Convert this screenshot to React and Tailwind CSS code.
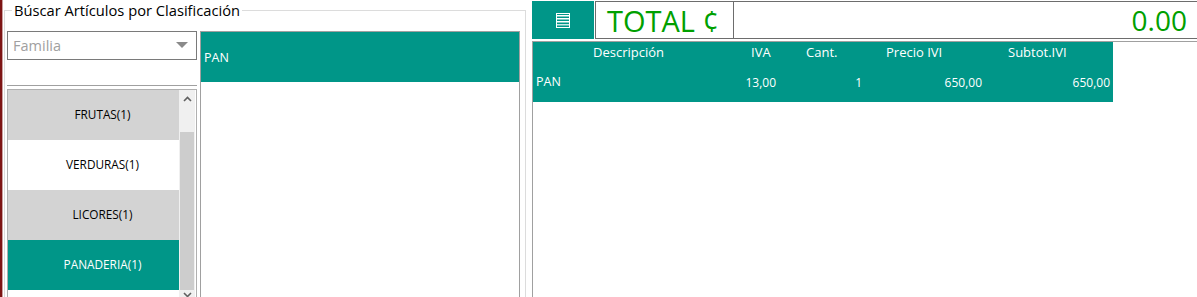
export default function App() {
    const categorias = [
        { nombre: "FRUTAS(1)", bg: "bg-[#d3d3d3]", text: "text-black" },
        { nombre: "VERDURAS(1)", bg: "bg-white", text: "text-black" },
        { nombre: "LICORES(1)", bg: "bg-[#d3d3d3]", text: "text-black" },
        { nombre: "PANADERIA(1)", bg: "bg-[#009688]", text: "text-white" },
    ];

    return (
        <div className="w-[1197px] h-[297px] overflow-hidden bg-white flex font-['Open_Sans',sans-serif]">
            {/* borde rojo de la ventana */}
            <div className="w-[3px] h-full flex">
                <div className="w-[2px] h-full bg-[#7d1414]"></div>
                <div className="w-[1px] h-full bg-[#c9a0a0]"></div>
            </div>
            <div className="w-[1px]"></div>

            <fieldset className="w-[522px] h-[320px] border border-[#dcdcdc] m-0 p-0 shrink-0">
                <legend className="ml-[7px] px-[2px] h-[20px] leading-[21px] text-[14.7px] text-black">
                    Búscar Artículos por Clasificación
                </legend>
                <div className="flex pl-[2px] mt-[11px]">
                    <div className="w-[190px] flex flex-col">
                        <div className="h-[29px] border border-[#7a7a7a] bg-white flex items-center justify-between px-[5px]">
                            <span className="text-[14.5px] text-[#a0a0a0]">Familia</span>
                            <svg width="12" height="7" viewBox="0 0 12 7" className="mr-[3px]">
                                <path d="M0 0 L12 0 L6 6 Z" fill="#8a8a8a" />
                            </svg>
                        </div>
                        <div className="h-[1px] bg-[#a0a0a0] mt-[25px] w-[190px]"></div>
                        <div className="mt-[3px] h-[220px] border border-[#b0b0b0] flex">
                            <div className="w-[171px] flex flex-col">
                                {categorias.map((c) => (
                                    <div
                                        key={c.nombre}
                                        className={`h-[50px] flex items-center justify-center pl-[18px] text-[11.8px] ${c.bg} ${c.text}`}
                                    >
                                        {c.nombre}
                                    </div>
                                ))}
                            </div>
                            <div className="w-[16px] flex flex-col bg-[#f0f0f0]">
                                <div className="h-[42px] flex justify-center pt-[6px]">
                                    <svg width="9" height="6" viewBox="0 0 9 6">
                                        <path d="M1 5 L4.5 1.5 L8 5" stroke="#606060" strokeWidth="1.6" fill="none" />
                                    </svg>
                                </div>
                                <div className="h-[158px] mx-[1px] bg-[#cdcdcd]"></div>
                                <div className="flex justify-center pt-[2px]">
                                    <svg width="9" height="6" viewBox="0 0 9 6">
                                        <path d="M1 1 L4.5 4.5 L8 1" stroke="#606060" strokeWidth="1.6" fill="none" />
                                    </svg>
                                </div>
                            </div>
                        </div>
                    </div>

                    <div className="ml-[3px] w-[320px] h-[300px] border border-[#a0a0a0] bg-white">
                        <div className="h-[50px] bg-[#009688] flex items-center pl-[3px] pt-[3px] text-[12.5px] text-white">
                            PAN
                        </div>
                    </div>
                </div>
            </fieldset>

            <div className="ml-[6px] flex-1 flex flex-col">
                <div className="mt-[1px] h-[38px] flex">
                    <div className="w-[62px] h-full bg-[#009688] flex items-center justify-center">
                        <svg width="14" height="15" viewBox="0 0 14 15">
                            <rect x="0.5" y="0.5" width="13" height="14" fill="none" stroke="white" strokeWidth="1" />
                            <rect x="1" y="2" width="12" height="1.5" fill="white" />
                            <rect x="1" y="5" width="12" height="1.5" fill="white" />
                            <rect x="1" y="8" width="12" height="1.5" fill="white" />
                            <rect x="1" y="11" width="12" height="1.5" fill="white" opacity="0.8" />
                        </svg>
                    </div>
                    <div className="ml-[1px] w-[139px] h-full border border-[#6d6d6d] flex items-center pl-[11px] text-[29px] leading-none text-[#00a000]">
                        TOTAL ¢
                    </div>
                    <div className="flex-1 h-full border-y border-[#6d6d6d] flex items-center justify-end pr-[10px] text-[28px] leading-none text-[#00a000]">
                        0.00
                    </div>
                </div>

                <div className="mt-[2px] flex-1 border-t border-l border-[#a0a0a0]">
                    <div className="w-[580px] bg-[#009688] text-white">
                        <div className="h-[21px] flex items-center text-[13px]">
                            <div className="w-[193px] pl-[60px]">Descripción</div>
                            <div className="w-[54px] pl-[25px]">IVA</div>
                            <div className="w-[85px] pl-[26px]">Cant.</div>
                            <div className="w-[120px] pl-[21px]">Precio IVI</div>
                            <div className="w-[128px] pl-[23px]">Subtot.IVI</div>
                        </div>
                        <div className="h-[39px] flex items-center text-[12px]">
                            <div className="w-[193px] pl-[3px] text-[12.5px]">PAN</div>
                            <div className="w-[54px] pr-[4px] text-right">13,00</div>
                            <div className="w-[85px] pr-[3px] text-right">1</div>
                            <div className="w-[120px] pr-[3px] text-right">650,00</div>
                            <div className="w-[128px] pr-[3px] text-right">650,00</div>
                        </div>
                    </div>
                </div>
            </div>
        </div>
    );
}
